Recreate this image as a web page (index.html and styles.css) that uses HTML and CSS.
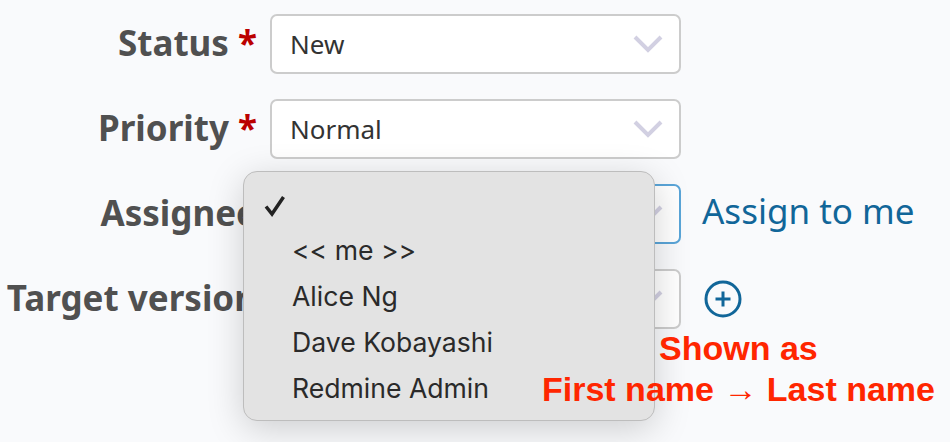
FILE: index.html
```html
<!DOCTYPE html>
<html lang="en">
<head>
<meta charset="utf-8">
<title>Issue form</title>
<link rel="stylesheet" href="styles.css">
</head>
<body>
<form class="form">
  <div class="row">
    <label class="label">Status <span class="req">*</span></label>
    <div class="select"><span>New</span><svg class="chev" viewBox="0 0 30 18"><path d="M2 2 L15 15 L28 2"/></svg></div>
  </div>
  <div class="row">
    <label class="label">Priority <span class="req">*</span></label>
    <div class="select"><span>Normal</span><svg class="chev" viewBox="0 0 30 18"><path d="M2 2 L15 15 L28 2"/></svg></div>
  </div>
  <div class="row">
    <label class="label">Assignee</label>
    <div class="select focus"><span></span><svg class="chev" viewBox="0 0 30 18"><path d="M2 2 L15 15 L28 2"/></svg></div>
    <a class="link">Assign to me</a>
  </div>
  <div class="row">
    <label class="label">Target version</label>
    <div class="select"><span></span><svg class="chev" viewBox="0 0 30 18"><path d="M2 2 L15 15 L28 2"/></svg></div>
    <svg class="add" viewBox="0 0 38 38"><circle cx="19" cy="19" r="17"/><path d="M19 11.5 V26.5 M11.5 19 H26.5"/></svg>
  </div>
</form>
<ul class="menu">
  <li class="opt checked"><svg class="check" viewBox="0 0 22 22"><path d="M2 11.5 L8 19 L19.5 2"/></svg></li>
  <li class="opt">&lt;&lt; me &gt;&gt;</li>
  <li class="opt">Alice Ng</li>
  <li class="opt">Dave Kobayashi</li>
  <li class="opt">Redmine Admin</li>
</ul>
<div class="note">
  <div>Shown as</div>
  <div>First name → Last name</div>
</div>
</body>
</html>
```
FILE: styles.css
```css
* { box-sizing: border-box; }
html, body { height: 100%; }
body {
  margin: 0;
  background: #f9fafc;
  overflow: hidden;
  position: relative;
  font-family: "Noto Sans", sans-serif;
}
.form {
  display: flex;
  flex-direction: column;
  gap: 25px;
  padding-top: 14px;
}
.row {
  display: flex;
  align-items: center;
  height: 60px;
}
.label {
  width: 257px;
  flex: none;
  text-align: right;
  font-size: 35px;
  font-weight: 700;
  color: #505050;
  white-space: nowrap;
  margin-top: -4px;
}
.req { color: #bb0000; }
.select {
  margin-left: 13px;
  width: 411px;
  height: 60px;
  flex: none;
  display: flex;
  align-items: center;
  justify-content: space-between;
  padding: 0 16px 0 18px;
  background: #fff;
  border: 2px solid #ccc;
  border-radius: 7px;
  font-size: 26px;
  color: #333;
}
.select.focus { border-color: #5aa5d8; }
.chev { width: 30px; height: 18px; fill: none; stroke: #d2d0e2; stroke-width: 4; }
.link {
  margin-left: 21px;
  font-size: 35px;
  color: #169;
  margin-top: -7px;
}
.add {
  margin-left: 23px;
  width: 38px;
  height: 38px;
  fill: none;
  stroke: #169;
  stroke-width: 3;
}
.menu {
  position: absolute;
  left: 243px;
  top: 171px;
  width: 412px;
  height: 250px;
  margin: 0;
  padding: 9px 0 0 48px;
  list-style: none;
  background: #e3e3e3;
  border: 1px solid #bdbdbd;
  border-radius: 14px;
  box-shadow: 0 8px 36px rgba(0, 0, 0, 0.18);
  font-family: Inter, sans-serif;
  font-size: 26.6px;
  color: #2a2a2a;
}
.opt { height: 46px; line-height: 46px; }
.checked { position: relative; }
.check {
  position: absolute;
  left: -28px;
  top: 14px;
  width: 22px;
  height: 22px;
  fill: none;
  stroke: #222;
  stroke-width: 3.5;
}
.note {
  position: absolute;
  top: 328px;
  left: 542px;
  font-family: "Liberation Sans", sans-serif;
  font-weight: 700;
  font-size: 34px;
  line-height: 41px;
  color: #ff2600;
  white-space: nowrap;
}
.note div:first-child { margin-left: 117px; }
```
